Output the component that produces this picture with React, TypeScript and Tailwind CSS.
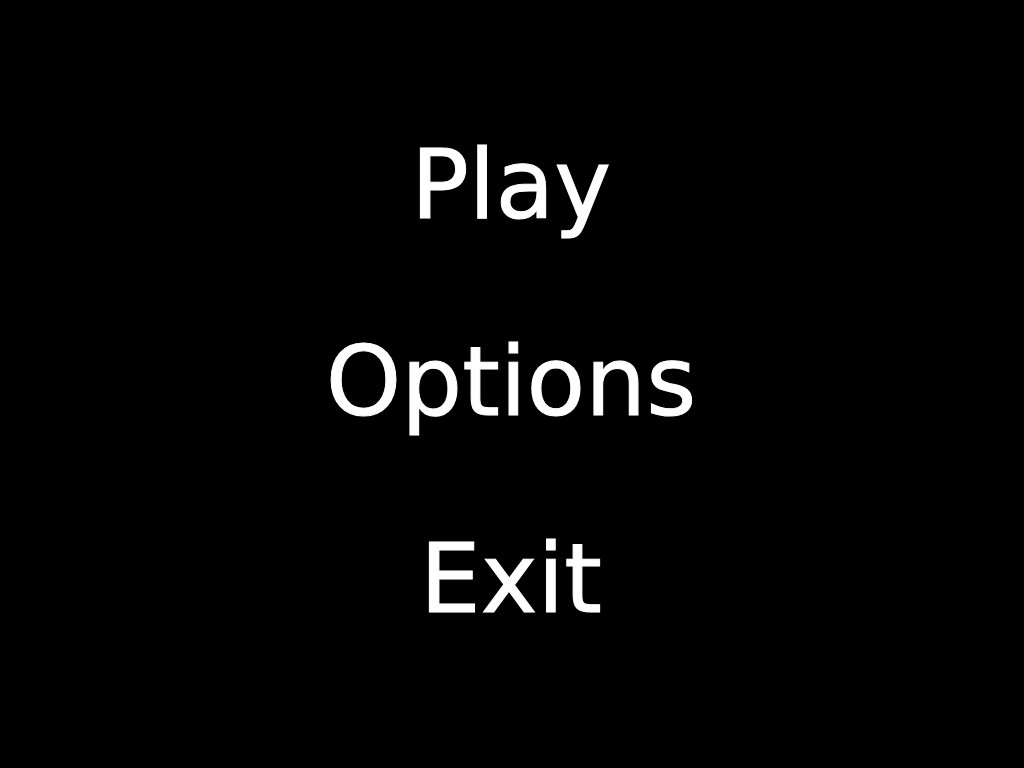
const items = ["Play", "Options", "Exit"];

export default function App() {
  return (
    <main className="flex min-h-screen items-center justify-center bg-black pr-0.5 pb-1 font-['DejaVu_Sans',sans-serif] text-white">
      <nav aria-label="Main menu" className="flex flex-col items-center gap-[85px]">
        {items.map((item) => (
          <button
            key={item}
            type="button"
            className="cursor-pointer text-8xl leading-[112px] [-webkit-text-stroke:1px_white]"
          >
            {item}
          </button>
        ))}
      </nav>
    </main>
  );
}
